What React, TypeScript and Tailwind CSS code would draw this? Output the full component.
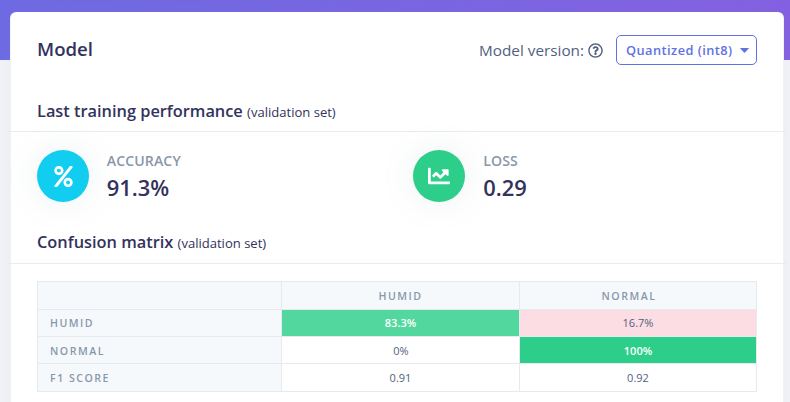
import type { ReactNode } from 'react';
import { FaChartLine, FaPercent, FaRegQuestionCircle } from 'react-icons/fa';

function SectionTitle({ title }: { title: string }) {
  return (
    <h2 className="pl-[30px] text-[16.35px] leading-6 font-semibold text-[#32325d]">
      {title} <span className="text-[13.05px] font-normal">(validation set)</span>
    </h2>
  );
}

function Metric({ label, value, color, icon }: { label: string; value: string; color: string; icon: ReactNode }) {
  return (
    <div className="flex w-[376.4px] shrink-0">
      <div className={`flex size-[52px] shrink-0 items-center justify-center rounded-full text-white shadow-[0_0_32px_rgba(136,152,170,0.15)] ${color}`}>
        {icon}
      </div>
      <div className="ml-[17.8px]">
        <div className="h-[22px] text-[14.1px] leading-[22px] font-semibold tracking-[0.1px] text-[#8898aa]">{label}</div>
        <div className="text-[21.9px] leading-8 font-semibold text-[#32325d]">{value}</div>
      </div>
    </div>
  );
}

function Label({ children, inset = 'pt-px' }: { children?: ReactNode; inset?: string }) {
  return (
    <div className={`flex items-center bg-[#f6f9fc] pl-3 text-[10.6px] font-semibold tracking-[1.5px] text-[#8898aa] ${inset}`}>
      {children}
    </div>
  );
}

function Head({ children, inset = '' }: { children: ReactNode; inset?: string }) {
  return (
    <div className={`flex items-center justify-center bg-[#f6f9fc] pt-0.5 text-[10.6px] font-semibold tracking-[1.5px] text-[#8898aa] ${inset}`}>
      {children}
    </div>
  );
}

function Value({ children, tone = 'bg-white text-[#525f7f]', inset = 'pt-px' }: { children: ReactNode; tone?: string; inset?: string }) {
  return <div className={`flex items-center justify-center text-[11px] ${inset} ${tone}`}>{children}</div>;
}

export default function App() {
  return (
    <div className="h-[402px] w-[790px] overflow-hidden bg-[#f4f5fa] bg-[linear-gradient(87deg,#6e6ae4,#8460e2)] bg-[length:100%_60px] bg-no-repeat pt-3 font-['Open_Sans','Noto_Sans',sans-serif]">
      <main className="ml-[10px] h-[420px] w-[774px] rounded-t-md border-x border-black/5 bg-white shadow-[0_0_28px_rgba(136,152,170,0.1)]">
        <header className="flex h-[86px] items-start justify-between pt-[23px] pr-[26px] pl-[26px]">
          <h1 className="text-[18.6px] leading-7 font-semibold text-[#32325d]">Model</h1>
          <div className="flex items-center">
            <span className="text-[15.3px] leading-[28px] text-[#525f7f]">Model version:</span>
            <FaRegQuestionCircle className="ml-1 size-[15px] text-[#525f7f]" />
            <button className="ml-[13px] flex h-[30px] w-[141px] items-center justify-between rounded-[5px] border border-[#5e72e4] pt-px pr-[7px] pl-[9px] text-[12.8px] font-semibold tracking-[0.45px] whitespace-nowrap text-[#5e72e4]">
              Quantized (int8)
              <svg className="h-[5px] w-[9px]" viewBox="0 0 9 5" fill="currentColor">
                <path d="M0.5 0h8q.5 0 .2.5L5 4.6q-.5.5-1 0L.3.5Q0 0 .5 0z" />
              </svg>
            </button>
          </div>
        </header>

        <section className="-mx-[4px] h-[34px] border-b border-[#e9ecef] pt-px">
          <SectionTitle title="Last training performance" />
        </section>
        <div className="flex h-[98px] pt-[18px] pl-[26px]">
          <Metric label="ACCURACY" value="91.3%" color="bg-[#11cdef]" icon={<FaPercent className="size-[21px]" />} />
          <Metric label="LOSS" value="0.29" color="bg-[#2dce89]" icon={<FaChartLine className="size-[22px]" />} />
        </div>

        <section className="-mx-[4px] h-[34px] border-b border-[#e9ecef]">
          <SectionTitle title="Confusion matrix" />
        </section>

        <div className="mt-[17px] ml-[26px] grid w-[720px] grid-cols-[243px_237px_236px] grid-rows-[27px_26px_26px_27px] gap-px border border-[#e6eaee] bg-[#e6eaee]">
          <Label />
          <Head>HUMID</Head>
          <Head inset="pr-[18px]">NORMAL</Head>
          <Label>HUMID</Label>
          <Value tone="bg-[#52d79e] font-semibold text-white">83.3%</Value>
          <Value tone="bg-[#fcdde3] text-[#525f7f]">16.7%</Value>
          <Label inset="pt-[3px]">NORMAL</Label>
          <Value inset="pt-[3px] pl-px">0%</Value>
          <Value inset="pt-[3px]" tone="bg-[#2dce89] font-semibold text-white">100%</Value>
          <Label inset="pt-0.5">F1 SCORE</Label>
          <Value>0.91</Value>
          <Value>0.92</Value>
        </div>
      </main>
    </div>
  );
}
